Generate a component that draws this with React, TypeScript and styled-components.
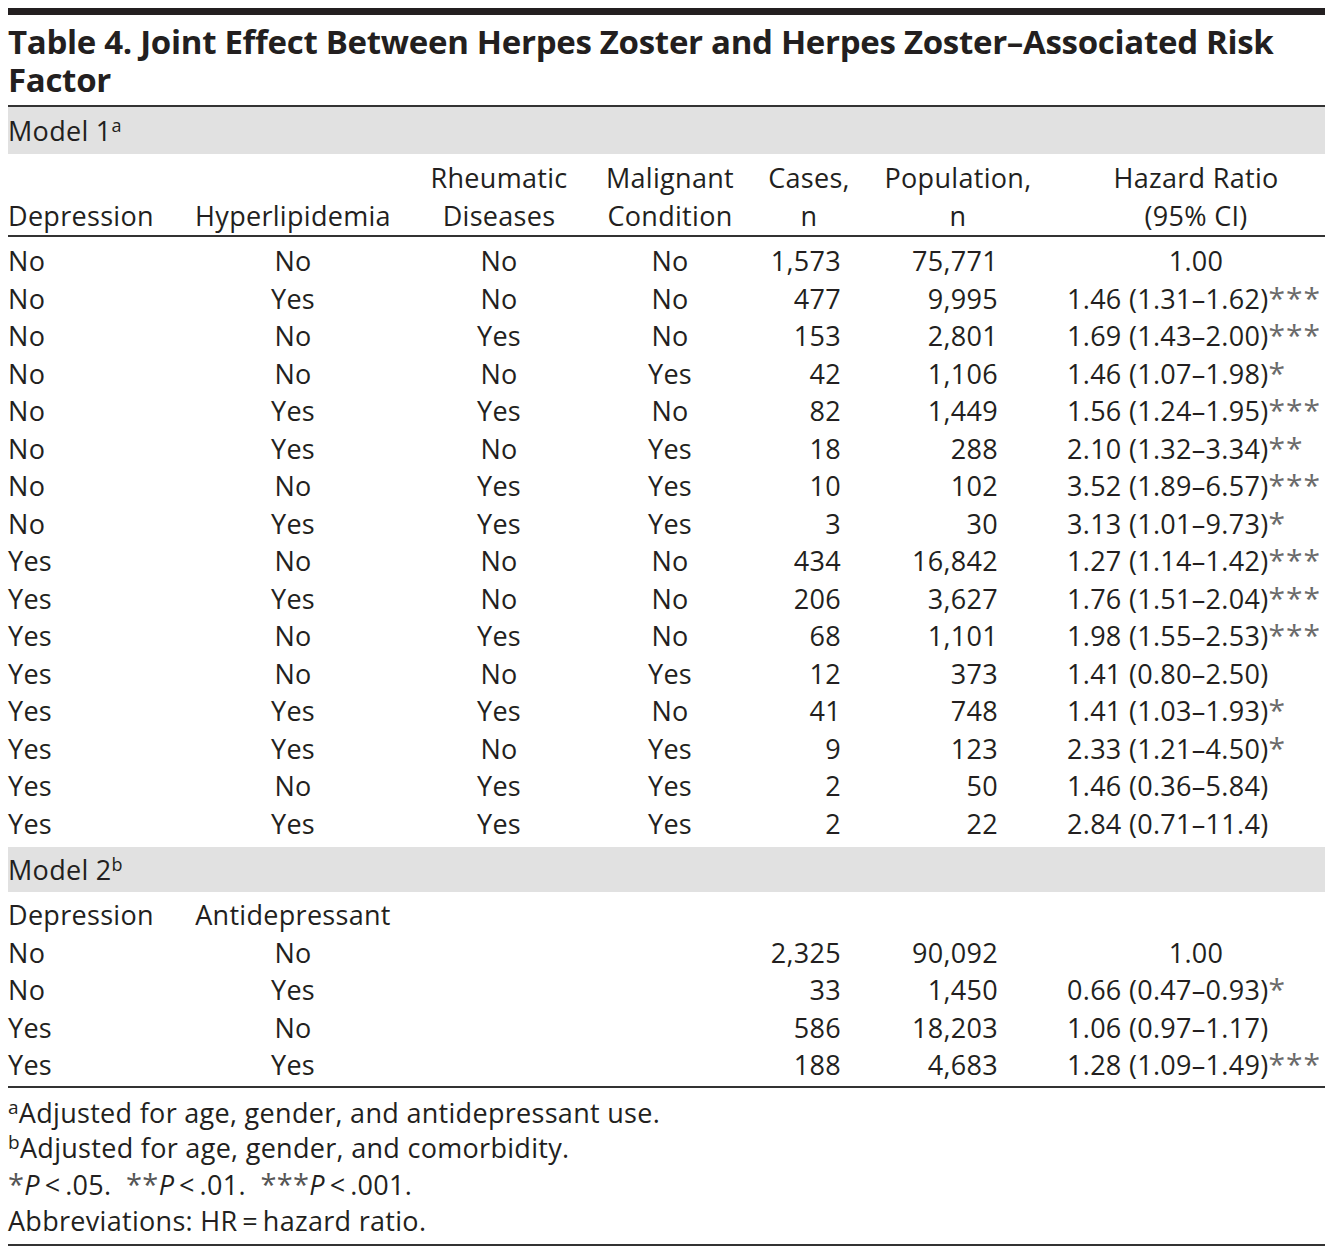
import * as React from 'react'
import styled, { createGlobalStyle } from 'styled-components'

const GlobalStyle = createGlobalStyle`
	body {
		margin: 0;
		background: #fff;
		color: #231f20;
		font-family: "Open Sans", "Liberation Sans", sans-serif;
	}
`

const Page = styled.div`
	width: 1317px;
	padding: 8px 8px 0 8px;
`

const TopRule = styled.div`
	height: 7px;
	background: #231f20;
`

const Title = styled.h1`
	margin: 0;
	padding: 8px 0 6px;
	font-size: 33px;
	line-height: 38px;
	font-weight: 700;
	letter-spacing: -0.3px;
	border-bottom: 2px solid #333;
`

const Band = styled.div<{ $height: number }>`
	background: #e1e1e1;
	height: ${p => p.$height}px;
	display: flex;
	align-items: center;
	font-size: 27px;
	letter-spacing: 0.3px;
`

const Sup = styled.sup`
	font-size: 18px;
	line-height: 0;
	vertical-align: 9px;
`

const Stars = styled.span`
	font-size: 30px;
	line-height: 0;
	letter-spacing: 1px;
	color: #6a6a6a;
`

const Head = styled.div`
	padding: 4px 0 1px;
	border-bottom: 2px solid #333;
`

const Body = styled.div<{ $pt: number; $pb: number; $ruled?: boolean }>`
	padding-top: ${p => p.$pt}px;
	padding-bottom: ${p => p.$pb}px;
	${p => p.$ruled && 'border-bottom: 2px solid #333;'}
`

const Row = styled.div<{ $height?: number }>`
	display: grid;
	grid-template-columns: 167px 236px 176px 166px 112px 202px 258px;
	height: ${p => p.$height ?? 37.5}px;
	align-items: center;
	font-size: 27px;
	line-height: 37px;
	letter-spacing: 0.3px;
	white-space: nowrap;
`

const Cell = styled.div<{ $align?: 'left' | 'center' | 'right'; $pr?: number }>`
	text-align: ${p => p.$align ?? 'center'};
	padding-right: ${p => p.$pr ?? 0}px;
`

const Notes = styled.div`
	padding: 7px 0 6px;
	font-size: 27px;
	line-height: 35.7px;
	letter-spacing: 0.3px;
	border-bottom: 2px solid #333;
`

const NoteSup = styled.sup`
	font-size: 19px;
	line-height: 0;
	vertical-align: 9px;
`

const NoteStars = styled.span`
	font-size: 29px;
	color: #555;
`

type Data = [string, string, string, string, string, string, string, number]

const model1: Data[] = [
	['No', 'No', 'No', 'No', '1,573', '75,771', '1.00', -1],
	['No', 'Yes', 'No', 'No', '477', '9,995', '1.46 (1.31–1.62)', 3],
	['No', 'No', 'Yes', 'No', '153', '2,801', '1.69 (1.43–2.00)', 3],
	['No', 'No', 'No', 'Yes', '42', '1,106', '1.46 (1.07–1.98)', 1],
	['No', 'Yes', 'Yes', 'No', '82', '1,449', '1.56 (1.24–1.95)', 3],
	['No', 'Yes', 'No', 'Yes', '18', '288', '2.10 (1.32–3.34)', 2],
	['No', 'No', 'Yes', 'Yes', '10', '102', '3.52 (1.89–6.57)', 3],
	['No', 'Yes', 'Yes', 'Yes', '3', '30', '3.13 (1.01–9.73)', 1],
	['Yes', 'No', 'No', 'No', '434', '16,842', '1.27 (1.14–1.42)', 3],
	['Yes', 'Yes', 'No', 'No', '206', '3,627', '1.76 (1.51–2.04)', 3],
	['Yes', 'No', 'Yes', 'No', '68', '1,101', '1.98 (1.55–2.53)', 3],
	['Yes', 'No', 'No', 'Yes', '12', '373', '1.41 (0.80–2.50)', 0],
	['Yes', 'Yes', 'Yes', 'No', '41', '748', '1.41 (1.03–1.93)', 1],
	['Yes', 'Yes', 'No', 'Yes', '9', '123', '2.33 (1.21–4.50)', 1],
	['Yes', 'No', 'Yes', 'Yes', '2', '50', '1.46 (0.36–5.84)', 0],
	['Yes', 'Yes', 'Yes', 'Yes', '2', '22', '2.84 (0.71–11.4)', 0],
]

const model2: Data[] = [
	['No', 'No', '', '', '2,325', '90,092', '1.00', -1],
	['No', 'Yes', '', '', '33', '1,450', '0.66 (0.47–0.93)', 1],
	['Yes', 'No', '', '', '586', '18,203', '1.06 (0.97–1.17)', 0],
	['Yes', 'Yes', '', '', '188', '4,683', '1.28 (1.09–1.49)', 3],
]

const DataRow: React.FC<{ d: Data }> = ({ d }) => (
	<Row>
		<Cell $align="left">{d[0]}</Cell>
		<Cell>{d[1]}</Cell>
		<Cell>{d[2]}</Cell>
		<Cell>{d[3]}</Cell>
		<Cell $align="right" $pr={24}>{d[4]}</Cell>
		<Cell $align="right" $pr={69}>{d[5]}</Cell>
		{d[7] < 0 ? (
			<Cell>{d[6]}</Cell>
		) : (
			<Cell $align="left">
				{d[6]}
				{d[7] > 0 && <Stars>{'*'.repeat(d[7])}</Stars>}
			</Cell>
		)}
	</Row>
)

export default function App() {
	return (
		<Page>
			<GlobalStyle />
			<TopRule />
			<Title>
				Table 4. Joint Effect Between Herpes Zoster and Herpes Zoster–Associated Risk Factor
			</Title>
			<Band $height={47}>
				<span>
					Model 1<Sup>a</Sup>
				</span>
			</Band>
			<Head>
				<Row $height={38}>
					<Cell />
					<Cell />
					<Cell>Rheumatic</Cell>
					<Cell>Malignant</Cell>
					<Cell>Cases,</Cell>
					<Cell $pr={16}>Population,</Cell>
					<Cell>Hazard Ratio</Cell>
				</Row>
				<Row $height={38}>
					<Cell $align="left">Depression</Cell>
					<Cell>Hyperlipidemia</Cell>
					<Cell>Diseases</Cell>
					<Cell>Condition</Cell>
					<Cell>n</Cell>
					<Cell $pr={16}>n</Cell>
					<Cell>(95% CI)</Cell>
				</Row>
			</Head>
			<Body $pt={5} $pb={5}>
				{model1.map((d, i) => (
					<DataRow key={i} d={d} />
				))}
			</Body>
			<Band $height={45}>
				<span>
					Model 2<Sup>b</Sup>
				</span>
			</Band>
			<Body $pt={4} $pb={2} $ruled>
				<Row>
					<Cell $align="left">Depression</Cell>
					<Cell>Antidepressant</Cell>
				</Row>
				{model2.map((d, i) => (
					<DataRow key={i} d={d} />
				))}
			</Body>
			<Notes>
				<div>
					<NoteSup>a</NoteSup>Adjusted for age, gender, and antidepressant use.
				</div>
				<div>
					<NoteSup>b</NoteSup>Adjusted for age, gender, and comorbidity.
				</div>
				<div>
					<NoteStars>*</NoteStars>
					<i>P</i>&thinsp;&lt;&thinsp;.05.&nbsp;&nbsp;
					<NoteStars>**</NoteStars>
					<i>P</i>&thinsp;&lt;&thinsp;.01.&nbsp;&nbsp;
					<NoteStars>***</NoteStars>
					<i>P</i>&thinsp;&lt;&thinsp;.001.
				</div>
				<div>Abbreviations: HR&thinsp;=&thinsp;hazard ratio.</div>
			</Notes>
		</Page>
	)
}
